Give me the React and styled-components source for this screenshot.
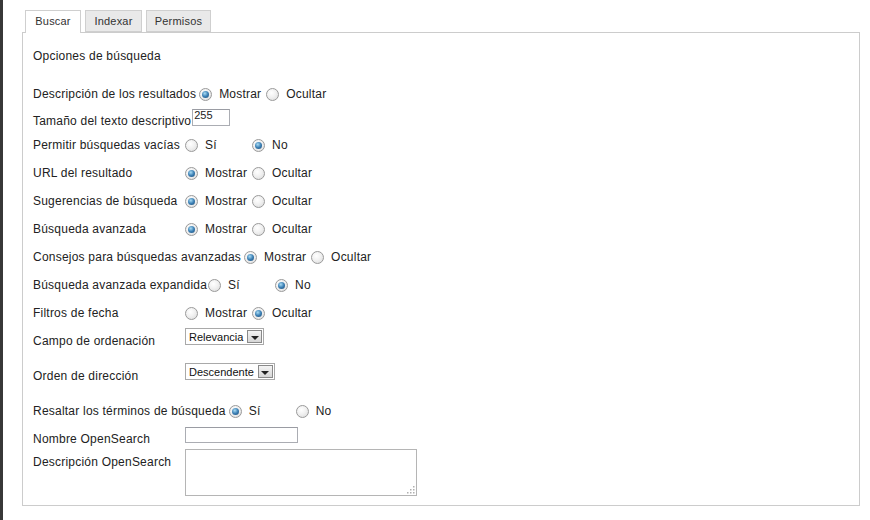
import React from "react";
import styled, { createGlobalStyle } from "styled-components";

const GlobalStyle = createGlobalStyle`
  html, body {
    margin: 0;
    padding: 0;
    background: #ffffff;
  }
  body {
    border-left: 3px solid #383838;
    min-height: 520px;
    box-sizing: border-box;
    font-family: "Liberation Sans", Arial, sans-serif;
    color: #222;
    letter-spacing: 0.22px;
  }
`;

const Page = styled.div`
  padding: 10px 0 0 19px;
  width: 838px;
`;

const TabBar = styled.div`
  display: flex;
  gap: 4px;
  padding-left: 3px;
  height: 22px;
  position: relative;
  z-index: 1;
`;

const Tab = styled.div`
  width: ${(p) => p.w}px;
  text-align: center;
  height: ${(p) => (p.active ? "23px" : "22px")};
  box-sizing: border-box;
  border: 1px solid #cfcfcf;
  border-bottom: ${(p) => (p.active ? "none" : "1px solid #cfcfcf")};
  background: ${(p) => (p.active ? "#ffffff" : "#e9e9e9")};
  font-size: 11px;
  line-height: 21px;
  letter-spacing: 0.2px;
  color: #333;
`;

const Panel = styled.div`
  border: 1px solid #cccccc;
  padding: 9px 10px 9px 10px;
  height: 474px;
  box-sizing: border-box;
  font-size: 12px;
`;

const Heading = styled.div`
  line-height: 28px;
  margin-bottom: 10px;
`;

const Row = styled.div`
  display: flex;
  align-items: flex-start;
  height: ${(p) => p.h}px;
`;

const Label = styled.div`
  box-sizing: border-box;
  min-width: 152px;
  line-height: 28px;
  white-space: nowrap;
  padding-right: ${(p) => p.gap ?? 3}px;
`;

const Options = styled.div`
  display: flex;
`;

const Option = styled.label`
  display: flex;
  align-items: center;
  width: 67px;
  line-height: 28px;
  white-space: nowrap;
`;

const Radio = styled.span`
  width: 13px;
  height: 13px;
  box-sizing: border-box;
  border-radius: 50%;
  border: 1px solid #9a9a9a;
  background: radial-gradient(circle at 40% 35%, #ffffff 0%, #f1f1f1 45%, #d9d9d9 100%);
  margin-right: 7px;
  display: flex;
  align-items: center;
  justify-content: center;

  &::after {
    content: "";
    display: ${(p) => (p.checked ? "block" : "none")};
    width: 7px;
    height: 7px;
    border-radius: 50%;
    background: radial-gradient(circle at 40% 35%, #a9dcf4 0%, #3b7fb4 50%, #1d4a72 100%);
  }
`;

const TextInput = styled.div`
  width: ${(p) => p.w}px;
  height: ${(p) => p.hh}px;
  box-sizing: border-box;
  border: 1px solid #abadb3;
  border-top-color: #9a9ca3;
  margin-top: ${(p) => p.top}px;
  font-size: 11px;
  line-height: 10px;
  letter-spacing: 0;
  padding-left: 1px;
  background: #fff;
`;

const TextArea = styled.div`
  width: 232px;
  height: 47px;
  box-sizing: border-box;
  border: 1px solid #b5b5b5;
  margin-top: 1px;
  position: relative;
  background: #fff;
`;

const Grip = styled.svg`
  position: absolute;
  right: 1px;
  bottom: 1px;
`;

const Select = styled.div`
  display: flex;
  align-items: center;
  height: 17px;
  box-sizing: border-box;
  border: 1px solid #a9a9a9;
  margin-top: 1px;
  font-size: 11px;
  letter-spacing: 0;
  padding: 0 1px 0 3px;
  background: #fff;
  gap: 4px;
  color: #111;
`;

const Arrow = styled.span`
  width: 15px;
  height: 13px;
  box-sizing: border-box;
  border: 1px solid #8a8a8a;
  background: linear-gradient(#f4f4f4, #d6d6d6);
  display: flex;
  align-items: center;
  justify-content: center;

  &::after {
    content: "";
    border-left: 4px solid transparent;
    border-right: 4px solid transparent;
    border-top: 4px solid #222;
    margin-top: 2px;
  }
`;

const RadioRow = ({ label, h = 28, gap, options, checked }) => (
  <Row h={h}>
    <Label gap={gap}>{label}</Label>
    <Options>
      {options.map((o, i) => (
        <Option key={o}>
          <Radio checked={i === checked} />
          {o}
        </Option>
      ))}
    </Options>
  </Row>
);

const show = ["Mostrar", "Ocultar"];
const yesNo = ["Sí", "No"];

export default function App() {
  return (
    <>
      <GlobalStyle />
      <Page>
        <TabBar>
          <Tab active w={56}>Buscar</Tab>
          <Tab w={57}>Indexar</Tab>
          <Tab w={65}>Permisos</Tab>
        </TabBar>
        <Panel>
          <Heading>Opciones de búsqueda</Heading>
          <RadioRow h={27} label="Descripción de los resultados" options={show} checked={0} />
          <Row h={24}>
            <Label gap={1}>Tamaño del texto descriptivo</Label>
            <TextInput w={38} hh={17} top={2}>255</TextInput>
          </Row>
          <RadioRow label="Permitir búsquedas vacías" options={yesNo} checked={1} />
          <RadioRow label="URL del resultado" options={show} checked={0} />
          <RadioRow label="Sugerencias de búsqueda" options={show} checked={0} />
          <RadioRow label="Búsqueda avanzada" options={show} checked={0} />
          <RadioRow label="Consejos para búsquedas avanzadas" options={show} checked={0} />
          <RadioRow label="Búsqueda avanzada expandida" gap={1} options={yesNo} checked={1} />
          <RadioRow label="Filtros de fecha" options={show} checked={1} />
          <Row h={35}>
            <Label>Campo de ordenación</Label>
            <Select>
              Relevancia <Arrow />
            </Select>
          </Row>
          <Row h={35}>
            <Label>Orden de dirección</Label>
            <Select>
              Descendente <Arrow />
            </Select>
          </Row>
          <RadioRow label="Resaltar los términos de búsqueda" options={yesNo} checked={0} />
          <Row h={23}>
            <Label>Nombre OpenSearch</Label>
            <TextInput w={113} hh={16} top={2} />
          </Row>
          <Row h={49}>
            <Label>Descripción OpenSearch</Label>
            <TextArea>
              <Grip width="9" height="9" viewBox="0 0 9 9">
                <g fill="#b0b0b0">
                  <rect x="7" y="1" width="1.5" height="1.5" />
                  <rect x="4" y="4" width="1.5" height="1.5" />
                  <rect x="7" y="4" width="1.5" height="1.5" />
                  <rect x="1" y="7" width="1.5" height="1.5" />
                  <rect x="4" y="7" width="1.5" height="1.5" />
                  <rect x="7" y="7" width="1.5" height="1.5" />
                </g>
              </Grip>
            </TextArea>
          </Row>
        </Panel>
      </Page>
    </>
  );
}
